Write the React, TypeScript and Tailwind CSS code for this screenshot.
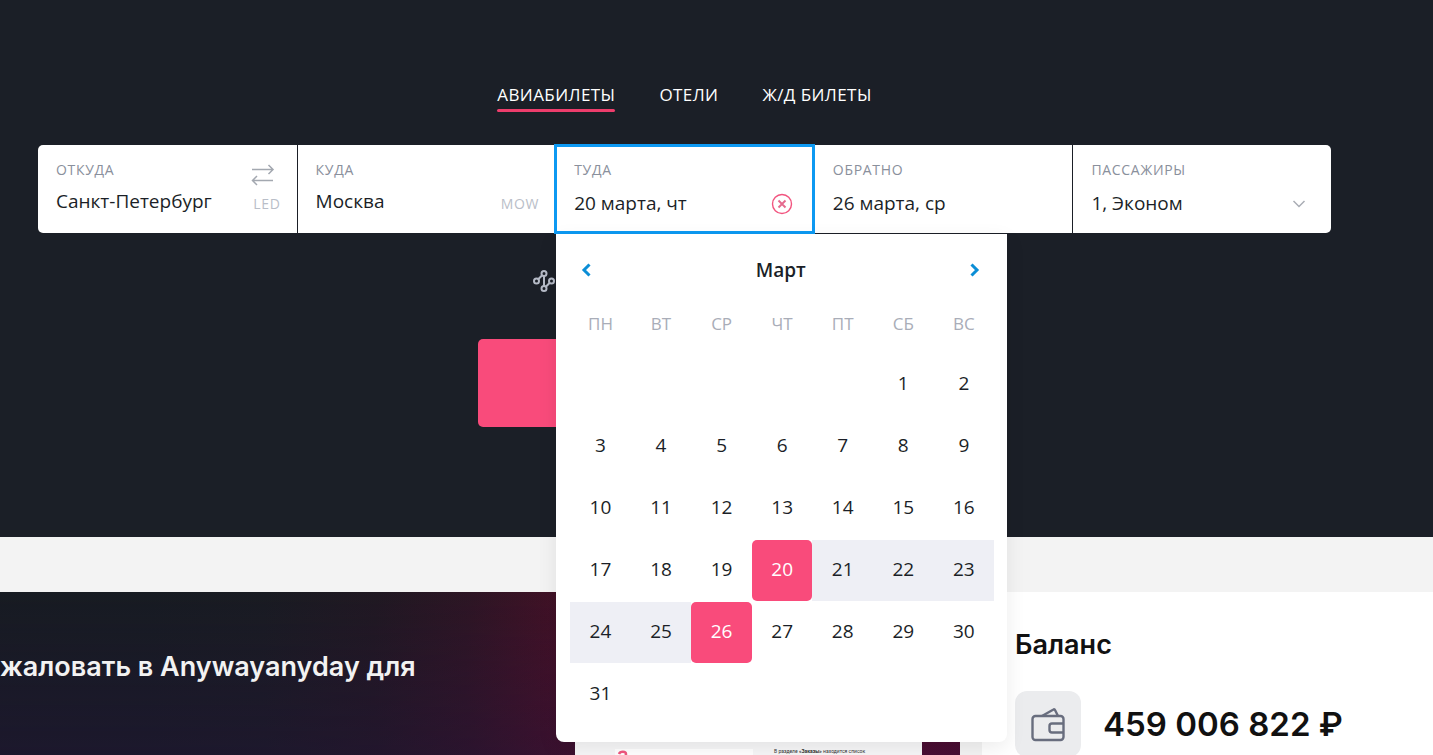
import React from "react";

const fields = "relative flex h-[88px] flex-col bg-white px-[18px] pt-[15px]";
const divided = "border-l border-[#1b1f27]";
const labelCls = "text-[14px] leading-5 tracking-wider text-[#8a909c] uppercase";
const valueCls = "w-full bg-transparent text-[19px] leading-7 text-[#1b1f27] outline-none";
const codeCls = "text-[14px] leading-5 tracking-wider text-[#b9bec8]";

const weekdays = ["ПН", "ВТ", "СР", "ЧТ", "ПТ", "СБ", "ВС"];
const weeks: (number | null)[][] = [
  [null, null, null, null, null, 1, 2],
  [3, 4, 5, 6, 7, 8, 9],
  [10, 11, 12, 13, 14, 15, 16],
  [17, 18, 19, 20, 21, 22, 23],
  [24, 25, 26, 27, 28, 29, 30],
  [31, null, null, null, null, null, null],
];

function dayClass(day: number) {
  if (day === 20 || day === 26) return "rounded-[5px] bg-[#f94b7b] text-white";
  if (day > 20 && day < 26) return "bg-[#eeeff5] text-[#1b1f27]";
  return "text-[#1b1f27]";
}

function Calendar() {
  return (
    <div className="absolute top-[89px] left-0 z-20 w-[451px] rounded-b-lg bg-white pt-4 pr-[13px] pb-4 pl-[14px] shadow-[0_6px_20px_rgba(0,0,0,0.08)]">
      <div className="flex h-10 items-center justify-between pr-[13px] pl-[10px]">
        <button type="button" aria-label="Предыдущий месяц">
          <svg width="14" height="16" viewBox="0 0 14 16" fill="none" stroke="#0b8ed6" strokeWidth="3">
            <path d="M9.5 2.5 4 8l5.500 5.500" />
          </svg>
        </button>
        <h2 className="text-[19px] leading-7 font-semibold text-[#1b1f27]">Март</h2>
        <button type="button" aria-label="Следующий месяц">
          <svg width="14" height="16" viewBox="0 0 14 16" fill="none" stroke="#0b8ed6" strokeWidth="3">
            <path d="M4.500 2.500 10 8l-5.500 5.500" />
          </svg>
        </button>
      </div>
      <table className="mt-1 w-full table-fixed border-collapse text-center">
        <thead>
          <tr className="h-[60px]">
            {weekdays.map((d) => (
              <th key={d} scope="col" className="p-0 text-[17px] font-normal text-[#a9adb8]">{d}</th>
            ))}
          </tr>
        </thead>
        <tbody>
          {weeks.map((week, i) => (
            <tr key={i} className="h-[62px]">
              {week.map((day, j) => (
                <td key={j} className="p-0 pb-px">
                  {day !== null && (
                    <button type="button" className={`block h-[61px] w-full pb-[3px] text-[19px] leading-7 ${dayClass(day)}`}>
                      {day}
                    </button>
                  )}
                </td>
              ))}
            </tr>
          ))}
        </tbody>
      </table>
    </div>
  );
}

function SearchForm() {
  return (
    <form className="mt-[33px]">
      <div className="grid grid-cols-5">
        <div className={`${fields} rounded-l-[5px]`}>
          <label htmlFor="from" className={labelCls}>Откуда</label>
          <input id="from" className={`mt-[7px] ${valueCls}`} defaultValue="Санкт-Петербург" />
          <div className="absolute top-[18px] right-[16px] flex flex-col items-end">
            <button type="button" aria-label="Поменять местами" className="mr-[6px]">
              <svg width="24" height="24" viewBox="0 0 24 24" fill="none" stroke="#a3a8b0" strokeWidth="1.500">
                <path d="M1 6.500h21M17.500 2l4.500 4.500-4.500 4.500M22 17.500H1.500M6 13l-4.500 4.500L6 22" />
              </svg>
            </button>
            <span className={`mt-[7px] ${codeCls}`}>LED</span>
          </div>
        </div>
        <div className={`${fields} ${divided}`}>
          <label htmlFor="to" className={labelCls}>Куда</label>
          <input id="to" className={`mt-[7px] ${valueCls}`} defaultValue="Москва" />
          <span className={`absolute top-[49px] right-[16px] ${codeCls}`}>MOW</span>
        </div>
        <div className={`${fields} ${divided} z-10 outline-3 -outline-offset-2 outline-[#0d99f2]`}>
          <label htmlFor="depart" className={labelCls}>Туда</label>
          <div className="mt-[9px] flex items-center justify-between">
            <input id="depart" className={valueCls} defaultValue="20 марта, чт" />
            <button type="button" aria-label="Очистить дату" className="mt-px mr-[3px]">
              <svg width="22" height="22" viewBox="0 0 22 22" fill="none" stroke="#f2547f" strokeWidth="1.400">
                <circle cx="11" cy="11" r="9.500" />
                <path d="m7.500 7.500 7 7m0-7-7 7" stroke="#e56a8e" strokeWidth="1.900" />
              </svg>
            </button>
          </div>
          <Calendar />
        </div>
        <div className={`${fields} ${divided} border-l-white`}>
          <label htmlFor="return" className={labelCls}>Обратно</label>
          <input id="return" className={`mt-[9px] ${valueCls}`} defaultValue="26 марта, ср" />
        </div>
        <div className={`${fields} ${divided} rounded-r-[5px]`}>
          <label htmlFor="passengers" className={labelCls}>Пассажиры</label>
          <div className="mt-[9px] flex items-center">
            <select id="passengers" className={`appearance-none ${valueCls}`}>
              <option>1, Эконом</option>
            </select>
            <svg width="14" height="10" viewBox="0 0 14 10" className="mt-1 mr-[7px] shrink-0" fill="none" stroke="#a9adb5" strokeWidth="1.500">
              <path d="m1.500 1 5.500 5.500L12.500 1" />
            </svg>
          </div>
        </div>
      </div>
      <div className="mt-9 flex justify-center">
        <a href="#route" aria-label="Сложный маршрут" className="block w-[303px]">
          <svg width="24" height="24" viewBox="0 0 24 24" fill="none" stroke="#b5bac6" strokeWidth="2">
            <circle cx="3.500" cy="12" r="2.500" />
            <circle cx="11" cy="4.500" r="2.500" />
            <circle cx="11" cy="19.500" r="2.500" />
            <circle cx="18.500" cy="12" r="2.500" />
            <path d="m5.200 10.200 4-4M11 7v10M12.800 17.700l4-4" />
          </svg>
        </a>
      </div>
      <button type="submit" aria-label="Найти билеты" className="mx-auto mt-[46px] block h-[88px] w-[413px] rounded-[5px] bg-[#f94b7b]" />
    </form>
  );
}

export default function App() {
  return (
    <div className="h-screen overflow-hidden bg-[#f3f3f3] font-['Open_Sans','Noto_Sans',sans-serif]">
      <header className="h-[537px] bg-[#1b1f27] pt-[82px] pr-[102px] pl-[38px]">
        <nav className="flex justify-center gap-[44px] text-[17px] leading-[26px] tracking-wide text-white">
          <a href="#avia" className="flex flex-col gap-px">
            АВИАБИЛЕТЫ
            <span className="h-[3px] rounded-full bg-[#ee3d6c]" />
          </a>
          <a href="#hotels">ОТЕЛИ</a>
          <a href="#rail">Ж/Д БИЛЕТЫ</a>
        </nav>
        <SearchForm />
      </header>
      <main className="mt-[55px] flex gap-[22px] font-['Inter',sans-serif]">
        <section className="flex h-[260px] w-[67%] justify-between bg-[linear-gradient(to_bottom,rgba(40,16,70,0)_0%,rgba(40,16,70,0.3)_65%),radial-gradient(circle_at_95%_30%,#5c0d2c_0%,#540d2b_12%,#431126_38%,#2d1524_48%,#201822_58%,#191b22_70%,#171b22_82%)] pt-[57px] pr-[38px]">
          <h1 className="text-[27px] leading-9 font-semibold whitespace-nowrap text-[#f2f2f2]">жаловать в Anywayanyday для</h1>
          <div className="mt-[85px] h-32 w-[347px] bg-[#f6f6f7] pt-3 pr-[57px] pl-10">
            <div className="flex justify-between font-['Roboto',sans-serif] text-[5px] leading-[8px] text-[#333]">
              <span className="mt-[3px] h-8 w-[138px] bg-white">
                <svg width="14" height="14" viewBox="0 0 14 14" fill="none" stroke="#f0577f" strokeWidth="2.500">
                  <path d="M4 5c1-3 7-3 7 0s-3 3-4 3" />
                </svg>
              </span>
              <p className="mt-px">В разделе <b>«Заказы»</b> находится список</p>
            </div>
          </div>
        </section>
        <section className="h-[260px] flex-1 bg-white pt-[35px] pl-[33px]">
          <h2 className="text-[27px] leading-9 font-semibold text-[#111]">Баланс</h2>
          <div className="mt-7 flex items-center gap-[22px]">
            <span className="flex size-[66px] items-center justify-center rounded-xl bg-[#ebecee]">
              <svg width="36" height="36" viewBox="0 0 36 36" fill="none" stroke="#686d7e" strokeWidth="2.400" strokeLinejoin="round">
                <rect x="2.500" y="10" width="31" height="24" rx="3" />
                <path d="M33.500 17.500H22a2.500 2.500 0 0 0-2.500 2.500v4a2.500 2.500 0 0 0 2.500 2.500h11.500M12 10l11.500-6.500a1 1 0 0 1 1.500.5l3 6" />
              </svg>
            </span>
            <p className="text-[33px] leading-[44px] font-semibold text-[#111]">459 006 822 ₽</p>
          </div>
        </section>
      </main>
    </div>
  );
}
